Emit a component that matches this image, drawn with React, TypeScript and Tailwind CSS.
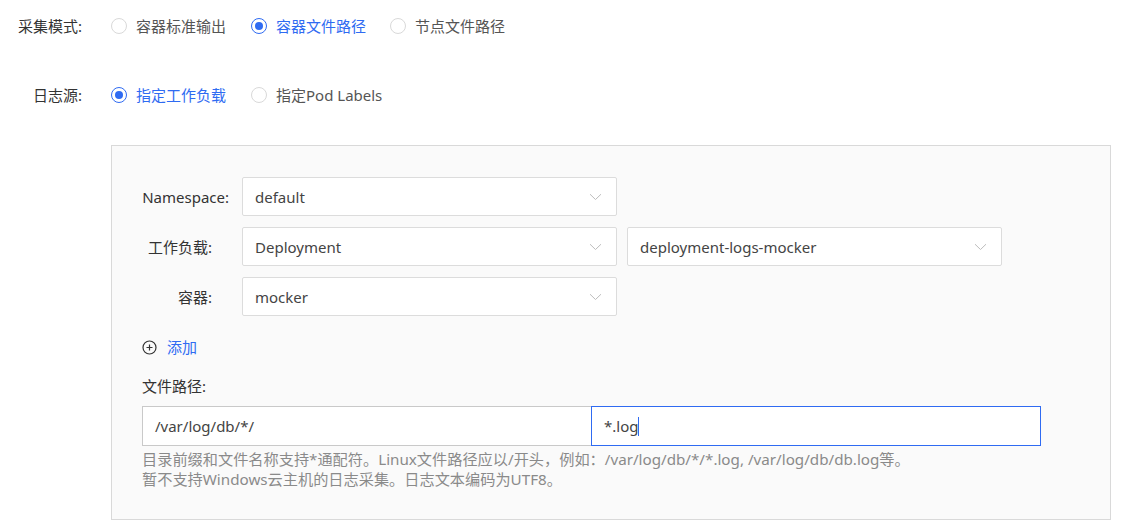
import React from "react";

const FONT = { fontFamily: '"Noto Sans", "Noto Sans CJK SC", sans-serif' };

function Radio({ checked, label }: { checked?: boolean; label: string }) {
  return (
    <div className="flex items-center">
      <span
        className={
          checked
            ? "w-[16px] h-[16px] rounded-full border border-[#2f6bf2] flex items-center justify-center bg-white"
            : "w-[16px] h-[16px] rounded-full border border-[#d9d9d9] bg-white"
        }
      >
        {checked && <span className="w-[8px] h-[8px] rounded-full bg-[#2f6bf2]" />}
      </span>
      <span className={checked ? "ml-[9px] text-[#2f6bf2]" : "ml-[9px] text-[#555]"}>{label}</span>
    </div>
  );
}

function Chevron() {
  return (
    <svg width="13" height="8" viewBox="0 0 13 8" fill="none">
      <path d="M1 1.2 L6.5 6.5 L12 1.2" stroke="#bdbdbd" strokeWidth="1" />
    </svg>
  );
}

function Select({ value }: { value: string }) {
  return (
    <div className="w-[375px] h-[39px] border border-[#dcdcdc] rounded-[2px] bg-white flex items-center justify-between pl-[12px] pr-[14px] text-[#444]">
      <span>{value}</span>
      <Chevron />
    </div>
  );
}

function FieldRow({ label, cjk, children }: { label: string; cjk?: boolean; children: React.ReactNode }) {
  return (
    <div className="flex items-center">
      <div className={cjk ? "w-[87px] pr-[17px] text-right text-[#333] whitespace-nowrap" : "w-[87px] text-right text-[#333] whitespace-nowrap"}>{label}</div>
      <div className="ml-[13px] flex gap-[10px]">{children}</div>
    </div>
  );
}

export default function App() {
  return (
    <div className="w-[1126px] h-[532px] bg-white text-[15px] leading-[20px] overflow-hidden" style={FONT}>
      <div className="flex items-center h-[51px]">
        <div className="w-[82px] text-right text-[#333]">采集模式:</div>
        <div className="ml-[29px] flex items-center">
          <div className="w-[140px]"><Radio label="容器标准输出" /></div>
          <div className="w-[139px]"><Radio checked label="容器文件路径" /></div>
          <Radio label="节点文件路径" />
        </div>
      </div>
      <div className="flex items-center h-[52px] mt-[18px]">
        <div className="w-[82px] text-right text-[#333]">日志源:</div>
        <div className="ml-[29px] flex items-center">
          <div className="w-[140px]"><Radio checked label="指定工作负载" /></div>
          <Radio label="指定Pod Labels" />
        </div>
      </div>
      <div className="ml-[111px] mt-[24px] w-[1000px] h-[375px] border border-[#d9d9d9] bg-[#fafafa] pt-[31px] pl-[30px]">
        <div className="flex flex-col gap-[11px]">
          <FieldRow label="Namespace:">
            <Select value="default" />
          </FieldRow>
          <FieldRow label="工作负载:" cjk>
            <Select value="Deployment" />
            <Select value="deployment-logs-mocker" />
          </FieldRow>
          <FieldRow label="容器:" cjk>
            <Select value="mocker" />
          </FieldRow>
        </div>
        <div className="flex items-center mt-[21px] h-[20px]">
          <svg width="15" height="15" viewBox="0 0 15 15" fill="none">
            <circle cx="7.5" cy="7.5" r="6.5" stroke="#333" strokeWidth="1.2" />
            <path d="M7.5 4.5 V10.5 M4.5 7.5 H10.5" stroke="#333" strokeWidth="1.2" />
          </svg>
          <span className="ml-[10px] text-[#2f6bf2]">添加</span>
        </div>
        <div className="mt-[19px] text-[#333]">文件路径:</div>
        <div className="mt-[10px] flex">
          <div className="w-[450px] h-[40px] border border-[#c9c9c9] bg-white flex items-center pl-[12px] text-[#444]">
            /var/log/db/*/
          </div>
          <div className="w-[450px] h-[40px] border border-[#2f6bf2] bg-white flex items-center pl-[12px] text-[#444] -ml-px">
            <span>*.log</span>
            <span className="w-px h-[19px] bg-[#2f6bf2]" />
          </div>
        </div>
        <div className="mt-[3px] text-[15.2px] leading-[20px] text-[#8a8a8a]">
          <div>目录前缀和文件名称支持*通配符。Linux文件路径应以/开头，例如：/var/log/db/*/*.log, /var/log/db/db.log等。</div>
          <div>暂不支持Windows云主机的日志采集。日志文本编码为UTF8。</div>
        </div>
      </div>
    </div>
  );
}
